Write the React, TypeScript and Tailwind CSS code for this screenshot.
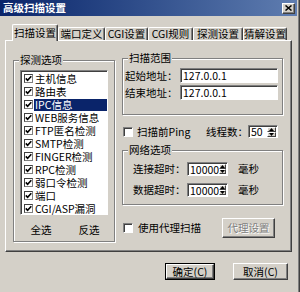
import React from 'react'

// classic win32 bevels
const raised =
  'border border-t-white border-l-white border-r-[#404040] border-b-[#404040] shadow-[inset_-1px_-1px_#808080]'
const sunken =
  'border border-t-[#808080] border-l-[#808080] border-r-white border-b-white shadow-[inset_1px_1px_#404040]'

const tabs = [
  { label: '扫描设置', w: 'w-[46px]', active: true },
  { label: '端口定义', w: 'w-[47px]' },
  { label: 'CGI设置', w: 'w-[43px]' },
  { label: 'CGI规则', w: 'w-[45px]' },
  { label: '探测设置', w: 'w-[50px]' },
  { label: '猜解设置', w: 'w-[44px]' },
]

const probes = [
  '主机信息',
  '路由表',
  'IPC信息',
  'WEB服务信息',
  'FTP匿名检测',
  'SMTP检测',
  'FINGER检测',
  'RPC检测',
  '弱口令检测',
  '端口',
  'CGI/ASP漏洞',
]

function Check() {
  return (
    <svg width="7" height="7" viewBox="0 0 7 7">
      <polyline points="0.8,3.4 2.6,5.3 6.3,1.2" fill="none" stroke="#000" strokeWidth="1.6" />
    </svg>
  )
}

function Group({ label, className, children }: { label: string; className: string; children: React.ReactNode }) {
  return (
    <div className={`relative border border-[#808080] shadow-[1px_1px_0_#fff,inset_1px_1px_0_#fff] ${className}`}>
      <span className="absolute -top-[7px] left-[5px] px-[1px] bg-[#d4d0c8] leading-[12px]">{label}</span>
      {children}
    </div>
  )
}

function Box() {
  return <div className={`w-[10px] h-[10px] bg-white ${sunken}`} />
}

function Spin({ value, className }: { value: string; className: string }) {
  return (
    <div className={`flex items-center bg-white ${sunken} ${className}`}>
      <span className="flex-1 pl-[2px] leading-[11px]">{value}</span>
      <div className="flex flex-col w-[10px] h-full py-[1px] pr-[1px]">
        {['M0 3 L2.5 0 L5 3 Z', 'M0 0 L2.5 3 L5 0 Z'].map(d => (
          <div key={d} className={`flex-1 flex items-center justify-center bg-[#d4d0c8] ${raised} shadow-none`}>
            <svg width="5" height="3" viewBox="0 0 5 3">
              <path d={d} fill="#000" />
            </svg>
          </div>
        ))}
      </div>
    </div>
  )
}

export default function App() {
  return (
    <div className="w-[300px] h-[292px] overflow-hidden bg-[#d4d0c8] pr-[3px] shadow-[inset_-1px_0_#404040,inset_-2px_0_#808080] text-black text-[10.5px] leading-[12px] [font-family:'Noto_Sans_CJK_SC',sans-serif]">
      {/* title bar */}
      <div className="h-[16px] flex items-center justify-between pl-[3px] pr-[2px] bg-linear-to-r from-[#0a246a] to-[#5f7db0]">
        <span className="text-white font-bold">高级扫描设置</span>
        <div className={`w-[13px] h-[11px] flex items-center justify-center bg-[#d4d0c8] ${raised}`}>
          <svg width="7" height="6" viewBox="0 0 7 6">
            <path d="M0.5 0.5 L6.5 5.5 M6.5 0.5 L0.5 5.5" stroke="#000" strokeWidth="1.5" />
          </svg>
        </div>
      </div>

      {/* tab strip */}
      <div className="mt-[8px] ml-[12px] h-[16px] flex items-end">
        {tabs.map(t =>
          t.active ? (
            <div
              key={t.label}
              className={`${t.w} h-[17px] -mb-px relative z-10 flex items-center justify-center bg-[#d4d0c8] rounded-t-[2px] border-t border-l border-r border-t-white border-l-white border-r-[#404040] shadow-[inset_-1px_0_#808080]`}
            >
              {t.label}
            </div>
          ) : (
            <div
              key={t.label}
              className={`${t.w} h-[13px] flex items-center justify-center rounded-t-[2px] border-t border-l border-r border-t-white border-l-white border-r-[#404040] shadow-[inset_-1px_0_#808080]`}
            >
              {t.label}
            </div>
          )
        )}
      </div>

      {/* tab panel */}
      <div className={`ml-[5px] w-[287px] h-[212px] flex items-start pl-[7px] ${raised}`}>
        {/* 探测选项 */}
        <Group label="探测选项" className="mt-[19px] w-[102px] h-[182px]">
          <div className={`ml-[6px] mt-[9px] w-[88px] h-[145px] bg-white pt-[1px] ${sunken}`}>
            {probes.map((p, i) => (
              <div key={p} className="h-[13px] flex items-center">
                <div className="ml-[3px] w-[9px] h-[9px] flex items-center justify-center bg-white border border-t-[#404040] border-l-[#404040] border-r-[#808080] border-b-[#808080]">
                  <Check />
                </div>
                <span
                  className={`ml-[1px] pl-[1px] flex-1 h-[12px] whitespace-nowrap ${
                    i === 2 ? 'bg-[#0a246a] text-white' : ''
                  }`}
                >
                  {p}
                </span>
              </div>
            ))}
          </div>
          <div className="ml-[3px] mt-[9px] w-[96px] grid grid-cols-2 text-center">
            <span>全选</span>
            <span>反选</span>
          </div>
        </Group>

        {/* right column */}
        <div className="ml-[7px] mt-[17px] w-[161px] flex flex-col">
          <Group label="扫描范围" className="h-[57px] pt-[9px] pl-[2px] flex flex-col gap-[2px]">
            {[
              ['起始地址：', '127.0.0.1'],
              ['结束地址：', '127.0.0.1'],
            ].map(([l, v]) => (
              <div key={l} className="h-[15px] flex items-center">
                <span className="w-[55px]">{l}</span>
                <div className={`w-[98px] h-[15px] flex items-center pl-[2px] bg-white ${sunken}`}>{v}</div>
              </div>
            ))}
          </Group>

          <div className="mt-[10px] h-[13px] flex items-center pr-[5px]">
            <div className="ml-[1px]">
              <Box />
            </div>
            <span className="ml-[4px]">扫描前Ping</span>
            <span className="ml-auto">线程数：</span>
            <Spin value="50" className="w-[30px] h-[13px]" />
          </div>

          <Group label="网络选项" className="mt-[12px] h-[55px] pt-[11px] pl-[10px] flex flex-col gap-[7px]">
            {['连接超时：', '数据超时：'].map(l => (
              <div key={l} className="h-[14px] flex items-center">
                <span className="w-[54px]">{l}</span>
                <Spin value="10000" className="w-[41px] h-[14px]" />
                <span className="ml-[10px]">毫秒</span>
              </div>
            ))}
          </Group>

          <div className="mt-[13px] h-[20px] flex items-center pr-[8px]">
            <div className="ml-[1px]">
              <Box />
            </div>
            <span className="ml-[5px]">使用代理扫描</span>
            <div
              className={`ml-auto w-[53px] h-[20px] flex items-center justify-center text-[#808080] [text-shadow:1px_1px_0_#fff] ${raised}`}
            >
              代理设置
            </div>
          </div>
        </div>
      </div>

      {/* dialog buttons */}
      <div className="mt-[11px] flex justify-end gap-[18px] pr-[9px]">
        <div className="w-[50px] h-[17px] border border-black">
          <div className={`w-full h-full flex items-center justify-center ${raised}`}>确定(C)</div>
        </div>
        <div className={`w-[55px] h-[17px] flex items-center justify-center ${raised}`}>取消(C)</div>
      </div>
    </div>
  )
}
